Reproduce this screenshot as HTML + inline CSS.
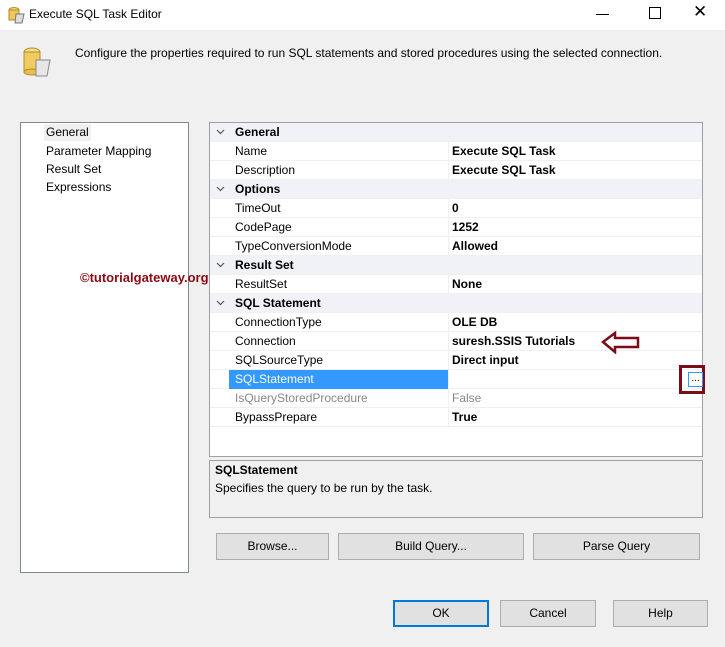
<!DOCTYPE html><html><head><style>
body{margin:0;width:725px;height:647px;background:#f0f0f0;font-family:"Segoe UI","Liberation Sans",sans-serif;font-size:12px;color:#000;position:relative;overflow:hidden}
.a{position:absolute}
.tb{left:0;top:0;width:725px;height:30px;background:#fff}
.row{position:absolute;left:0;width:492px;height:19px;line-height:18px;border-bottom:1px solid #f0f0f0;box-sizing:border-box}
.row .n{position:absolute;left:25px}
.row .v{position:absolute;left:242px;font-weight:bold}
.row .sep{position:absolute;left:238px;top:0;width:1px;height:19px;background:#f0f0f0}
.hd{background:#f0f2f7;font-weight:bold}
.hd .n{left:25px}
.hd svg{position:absolute;left:6px;top:6px}
.btn{position:absolute;height:27px;border:1px solid #adadad;background:#e1e1e1;box-sizing:border-box;text-align:center;line-height:25px}
</style></head><body>
<div class="a tb"></div>
<svg class="a" style="left:8px;top:6px" width="18" height="18"><ellipse cx="6" cy="4" rx="5" ry="2.5" fill="#f3d37a" stroke="#b48a2a"/><rect x="1" y="4" width="10" height="10" fill="#f0c75a" stroke="#b48a2a"/><path d="M8 8h8l-2 9h-7z" fill="#ddd" stroke="#777"/></svg>
<div class="a" style="left:29px;top:7px">Execute SQL Task Editor</div>
<div class="a" style="left:596px;top:14px;width:13px;height:1px;background:#000"></div>
<div class="a" style="left:649px;top:7px;width:10px;height:10px;border:1px solid #000"></div>
<div class="a" style="left:693px;top:2px;font-size:17px">✕</div>
<svg class="a" style="left:22px;top:46px" width="30" height="32"><ellipse cx="10" cy="6" rx="8" ry="4" fill="#f6e08e" stroke="#b48a2a"/><rect x="2" y="6" width="16" height="20" fill="#efcb62" stroke="#b48a2a"/><ellipse cx="10" cy="26" rx="8" ry="3" fill="#e8c050" stroke="#b48a2a"/><path d="M14 14h14l-3 16h-11z" fill="#e6e6e6" stroke="#888"/></svg>
<div class="a" style="left:75px;top:46px">Configure the properties required to run SQL statements and stored procedures using the selected connection.</div>
<div class="a" style="left:20px;top:122px;width:167px;height:449px;background:#fff;border:1px solid #828790"></div>
<div class="a" style="left:44px;top:124px;background:#f0f0f0;padding:0 2px;line-height:17px">General</div>
<div class="a" style="left:46px;top:143px;line-height:17px">Parameter Mapping</div>
<div class="a" style="left:46px;top:161px;line-height:17px">Result Set</div>
<div class="a" style="left:46px;top:179px;line-height:17px">Expressions</div>
<div class="a" style="left:80px;top:270px;color:#8b0a14;font-weight:bold;font-size:13px">©tutorialgateway.org</div>
<div class="a" style="left:209px;top:122px;width:492px;height:333px;background:#fff;border:1px solid #a0a0a0">
<div class="row hd" style="top:0"><svg width="9" height="6"><path d="M1 1l3.5 3.5L8 1" fill="none" stroke="#555" stroke-width="1.2"/></svg><span class="n">General</span></div>
<div class="row" style="top:19px"><span class="n">Name</span><span class="sep"></span><span class="v">Execute SQL Task</span></div>
<div class="row" style="top:38px"><span class="n">Description</span><span class="sep"></span><span class="v">Execute SQL Task</span></div>
<div class="row hd" style="top:57px"><svg width="9" height="6"><path d="M1 1l3.5 3.5L8 1" fill="none" stroke="#555" stroke-width="1.2"/></svg><span class="n">Options</span></div>
<div class="row" style="top:76px"><span class="n">TimeOut</span><span class="sep"></span><span class="v">0</span></div>
<div class="row" style="top:95px"><span class="n">CodePage</span><span class="sep"></span><span class="v">1252</span></div>
<div class="row" style="top:114px"><span class="n">TypeConversionMode</span><span class="sep"></span><span class="v">Allowed</span></div>
<div class="row hd" style="top:133px"><svg width="9" height="6"><path d="M1 1l3.5 3.5L8 1" fill="none" stroke="#555" stroke-width="1.2"/></svg><span class="n">Result Set</span></div>
<div class="row" style="top:152px"><span class="n">ResultSet</span><span class="sep"></span><span class="v">None</span></div>
<div class="row hd" style="top:171px"><svg width="9" height="6"><path d="M1 1l3.5 3.5L8 1" fill="none" stroke="#555" stroke-width="1.2"/></svg><span class="n">SQL Statement</span></div>
<div class="row" style="top:190px"><span class="n">ConnectionType</span><span class="sep"></span><span class="v">OLE DB</span></div>
<div class="row" style="top:209px"><span class="n">Connection</span><span class="sep"></span><span class="v">suresh.SSIS Tutorials</span></div>
<div class="row" style="top:228px"><span class="n">SQLSourceType</span><span class="sep"></span><span class="v">Direct input</span></div>
<div class="row" style="top:247px"><span class="a" style="left:19px;top:0;width:219px;height:19px;background:#3399ff"></span><span class="n" style="color:#fff">SQLStatement</span><span class="sep"></span></div>
<div class="row" style="top:266px"><span class="n" style="color:#888">IsQueryStoredProcedure</span><span class="sep"></span><span class="v" style="color:#888;font-weight:normal">False</span></div>
<div class="row" style="top:285px"><span class="n">BypassPrepare</span><span class="sep"></span><span class="v">True</span></div>
</div>
<svg class="a" style="left:601px;top:330px" width="40" height="24"><path d="M2 12L14 3v5h23v9H14v5z" fill="none" stroke="#7b0c1a" stroke-width="2.5"/></svg>
<div class="a" style="left:679px;top:365px;width:26px;height:29px;border:3px solid #7b0c1a;box-sizing:border-box"></div>
<div class="a" style="left:688px;top:372px;width:15px;height:15px;border:1px solid #3399ff;background:#fff;box-sizing:border-box;font-size:10px;text-align:center;line-height:11px">...</div>
<div class="a" style="left:209px;top:460px;width:494px;height:58px;border:1px solid #a0a0a0;box-sizing:border-box"></div>
<div class="a" style="left:215px;top:463px;font-weight:bold">SQLStatement</div>
<div class="a" style="left:215px;top:481px">Specifies the query to be run by the task.</div>
<div class="btn" style="left:216px;top:533px;width:113px">Browse...</div>
<div class="btn" style="left:338px;top:533px;width:186px">Build Query...</div>
<div class="btn" style="left:533px;top:533px;width:167px">Parse Query</div>
<div class="btn" style="left:393px;top:600px;width:96px;border:2px solid #0078d7;line-height:23px">OK</div>
<div class="btn" style="left:500px;top:600px;width:96px">Cancel</div>
<div class="btn" style="left:613px;top:600px;width:95px">Help</div>
</body></html>
